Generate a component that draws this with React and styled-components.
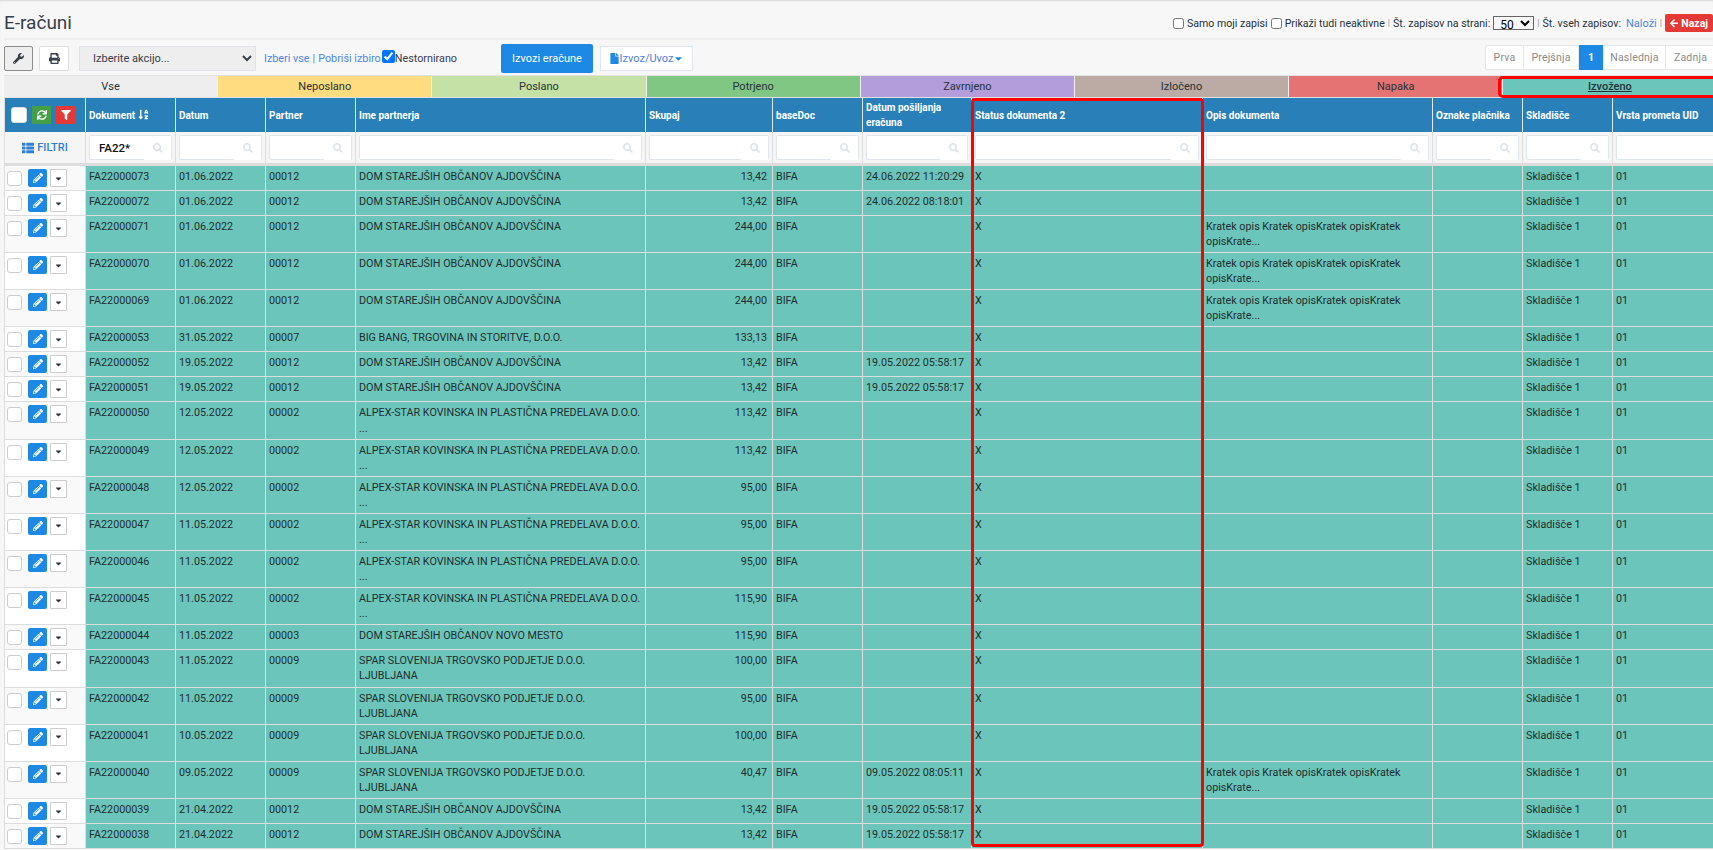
import styled, { createGlobalStyle } from "styled-components";
import {
  FaArrowLeft,
  FaCaretDown,
  FaFile,
  FaFilter,
  FaPencilAlt,
  FaPrint,
  FaSearch,
  FaSortAlphaDown,
  FaSync,
  FaThList,
  FaWrench,
} from "react-icons/fa";

const GlobalStyle = createGlobalStyle`
  html, body {
    margin: 0;
    height: 850px;
    overflow: hidden;
    background: #f7f7f7;
  }
  body {
    font-family: Roboto, "Liberation Sans", sans-serif;
    font-size: 11px;
    line-height: 15px;
    color: #263238;
  }
  * { box-sizing: border-box; }
`;

const Page = styled.div`
  width: 1713px;
  padding-left: 4px;
  box-shadow: inset 0 2px 2px -1px #d8d8d8;
`;

// naslov in nastavitve zgoraj
const Header = styled.header`
  display: flex;
  align-items: center;
  justify-content: space-between;
  height: 40px;
  padding-top: 8px;
  border-bottom: 2px solid #eeeeee;
`;

const Title = styled.h1`
  margin: 0;
  font-size: 19px;
  font-weight: 400;
  line-height: 24px;
  color: #37404a;
`;

const Options = styled.div`
  display: flex;
  align-items: center;
  gap: 3px;
  font-size: 10.6px;
`;

const Check = styled.input.attrs({ type: "checkbox" })`
  width: ${(p) => p.$size || 11}px;
  height: ${(p) => p.$size || 11}px;
  margin: 0;
`;

const Sep = styled.span`
  color: #8a9299;
  font-size: 9px;
`;

const PageSize = styled.select`
  width: 41px;
  height: 14px;
  padding: 0 0 0 2px;
  border: 1px solid #666;
  border-radius: 0;
  background: #f7f7f7;
  font-family: inherit;
  font-size: 12px;
`;

const Link = styled.a`
  color: #4f86e8;
`;

const LoadLink = styled(Link)`
  margin-left: 2px;
  font-size: 11px;
`;

const BackButton = styled.button`
  display: flex;
  align-items: center;
  gap: 3px;
  width: 48px;
  height: 18px;
  padding: 0 5px;
  border: 0;
  border-radius: 2px;
  background: #e53935;
  color: #fff;
  font-family: inherit;
  font-size: 10.5px;
  font-weight: 700;
`;

// orodna vrstica
const Toolbar = styled.div`
  display: flex;
  align-items: center;
  height: 35px;
  padding-top: 1px;
`;

const IconButton = styled.button`
  display: flex;
  align-items: center;
  justify-content: center;
  width: ${(p) => p.$w}px;
  height: 25px;
  margin-right: ${(p) => p.$gap}px;
  padding: 0;
  border: 1px solid ${(p) => (p.$pressed ? "#8c8c8c" : "#dddddd")};
  border-radius: 2px;
  background: ${(p) => (p.$pressed ? "#eeeeee" : "#ffffff")};
  color: #37404a;
  font-size: 11px;
`;

const ActionSelect = styled.select`
  width: 177px;
  height: 25px;
  margin-right: 8px;
  padding-left: 9px;
  border: 1px solid #dde4ec;
  border-radius: 0;
  background: #eeeeee;
  color: #37404a;
  font-family: inherit;
  font-size: 11px;
`;

const Selection = styled.div`
  display: flex;
  align-items: center;
  width: 237px;
  color: #37404a;
  font-size: 10.8px;
`;

const LinkSep = styled.span`
  margin: 0 3px;
  color: #4f86e8;
`;

const Checked = styled(Check)`
  margin: -3px 0 0 1px;
`;

const PrimaryButton = styled.button`
  width: 92px;
  height: 29px;
  margin-right: 7px;
  border: 0;
  border-radius: 2px;
  background: #1e88e5;
  color: #fff;
  font-family: inherit;
  font-size: 11px;
`;

const ExportButton = styled.button`
  display: flex;
  align-items: center;
  justify-content: center;
  width: 93px;
  height: 25px;
  padding: 0;
  border: 1px solid #dce7f1;
  background: #fff;
  color: #4f7ee0;
  font-family: inherit;
  font-size: 11px;
  svg { color: #1e88e5; }
`;

const Pager = styled.nav`
  display: flex;
  height: 25px;
  margin: 0 -4px 2px auto;
  border: 1px solid #e6e6e6;
  border-radius: 2px;
  background: #fff;
`;

const PagerItem = styled.span`
  display: flex;
  align-items: center;
  justify-content: center;
  width: ${(p) => p.$w}px;
  margin-top: ${(p) => (p.$active ? "-1px" : 0)};
  margin-bottom: ${(p) => (p.$active ? "-1px" : 0)};
  border-right: 1px solid #e6e6e6;
  background: ${(p) => (p.$active ? "#1e88e5" : "transparent")};
  color: ${(p) => (p.$active ? "#fff" : "#8a8a8a")};
  font-size: 10.5px;
  font-weight: ${(p) => (p.$active ? 700 : 400)};
  letter-spacing: 0.2px;
`;

// zavihki po statusih
const Tabs = styled.div`
  display: grid;
  grid-template-columns: repeat(8, 214.2px);
  width: 1714px;
  height: 23px;
  border-top: 1px solid #e2e2e2;
  border-bottom: 1px solid #e2e2e2;
`;

const Tab = styled.div`
  position: relative;
  height: 21px;
  border-right: 1px solid #f0f0f0;
  background: ${(p) => p.$color};
  color: #263238;
  font-size: 11px;
  font-weight: ${(p) => (p.$active ? 500 : 400)};
  line-height: 21px;
  text-align: center;
  text-decoration: ${(p) => (p.$active ? "underline" : "none")};
`;

const TabMark = styled.span`
  position: absolute;
  top: 0;
  left: -5px;
  width: 225px;
  height: 22px;
  border: 3px solid #ff0000;
  border-radius: 5px;
`;

const TableWrap = styled.div`
  position: relative;
  width: 1709px;
`;

const ColumnMark = styled.div`
  position: absolute;
  top: 0;
  left: 967px;
  width: 233px;
  height: 749px;
  border: 3px solid #ff0000;
  border-radius: 4px;
  pointer-events: none;
`;

const Table = styled.table`
  width: 1841px;
  table-layout: fixed;
  border-collapse: separate;
  border-spacing: 0;
  border-left: 1px solid #dddddd;
`;

const Col = styled.col`
  width: ${(p) => p.$w}px;
`;

const Th = styled.th`
  height: 34px;
  padding: 2px 3px;
  border-right: 1px solid #dfe9f0;
  background: #2980b9;
  color: #fff;
  font-size: 10px;
  font-weight: 700;
  text-align: left;
  vertical-align: middle;
`;

const HeadTools = styled.div`
  display: flex;
  align-items: center;
  gap: 5px;
  padding-left: 3px;
`;

const HeadCheck = styled.span`
  width: 16px;
  height: 16px;
  border: 1px solid #ddd;
  border-radius: 3px;
  background: #fff;
`;

const HeadButton = styled.span`
  display: flex;
  align-items: center;
  justify-content: center;
  width: 19px;
  height: 18px;
  border-radius: 1px;
  background: ${(p) => p.$color};
  color: #fff;
  font-size: 10px;
`;

const SortIcon = styled(FaSortAlphaDown)`
  margin-left: 3px;
  font-size: 11px;
  vertical-align: -1px;
`;

const FilterCell = styled.td`
  height: 34px;
  padding: 3px;
  border-right: 1px solid #dddddd;
  border-bottom: 3px solid #dddddd;
  background: #f5f5f5;
`;

const FilterLabel = styled.div`
  display: flex;
  align-items: center;
  justify-content: center;
  gap: 3px;
  color: #2f80d8;
  font-size: 11px;
  font-weight: 500;
  svg { font-size: 12px; }
`;

const FilterBox = styled.div`
  display: flex;
  height: 25px;
  border: 1px solid #e0e6ed;
  border-radius: 2px;
  background: #fff;
`;

const FilterInput = styled.input`
  flex: 1;
  min-width: 0;
  padding: 0 0 0 9px;
  border: 0;
  outline: 0;
  background: transparent;
  color: #111;
  font-family: inherit;
  font-size: 11.5px;
  font-weight: 500;
`;

const FilterIcon = styled.span`
  display: flex;
  flex: none;
  align-items: center;
  justify-content: center;
  width: 27px;
  margin-bottom: -1px;
  background: #fff;
  color: #dbe3ec;
  font-size: 10px;
`;

const ActionCell = styled.td`
  height: 25px;
  padding: 0;
  border-right: 1px solid #dddddd;
  border-bottom: 1px solid #dddddd;
  vertical-align: top;
`;

const Row = styled.tr`
  &:nth-child(odd) ${ActionCell} {
    background: #f9f9f9;
  }
  &:nth-child(even) ${ActionCell} {
    background: #ffffff;
  }
`;

const RowTools = styled.div`
  display: flex;
  align-items: flex-start;
  padding: 3px 0 0 2px;
`;

const RowCheck = styled.span`
  width: 15px;
  height: 15px;
  margin-top: 2px;
  margin-right: 6px;
  border: 1px solid #cccccc;
  border-radius: 3px;
  background: #fff;
`;

const EditButton = styled.span`
  display: flex;
  align-items: center;
  justify-content: center;
  width: 19px;
  height: 18px;
  margin-right: 3px;
  border-radius: 2px;
  background: #1e88e5;
  color: #fff;
  font-size: 10px;
`;

const MenuButton = styled.span`
  display: flex;
  align-items: center;
  justify-content: center;
  width: 17px;
  height: 18px;
  border: 1px solid #cccccc;
  border-radius: 1px;
  background: #fff;
  color: #263238;
  font-size: 9px;
`;

const Td = styled.td`
  padding: 3px ${(p) => (p.$right ? "5px" : "3px")} 3px 3px;
  border-right: 1px solid #dddddd;
  border-bottom: 1px solid #dddddd;
  background: #6cc5bb;
  color: #1f2d2d;
  font-size: 10.75px;
  line-height: 15.08px;
  text-align: ${(p) => (p.$right ? "right" : "left")};
  vertical-align: top;
`;

const tabs = [
  ["Vse", "#eeeeee"],
  ["Neposlano", "#ffdc7f"],
  ["Poslano", "#c5e1a5"],
  ["Potrjeno", "#81c784"],
  ["Zavrnjeno", "#b39ddb"],
  ["Izločeno", "#bcaaa4"],
  ["Napaka", "#e57373"],
  ["Izvoženo", "#6cc5bb"],
];

const columns = [
  { name: "Dokument", width: 90 },
  { name: "Datum", width: 90 },
  { name: "Partner", width: 90 },
  { name: "Ime partnerja", width: 290 },
  { name: "Skupaj", width: 127 },
  { name: "baseDoc", width: 90 },
  { name: "Datum pošiljanja eračuna", width: 109 },
  { name: "Status dokumenta 2", width: 231 },
  { name: "Opis dokumenta", width: 230 },
  { name: "Oznake plačnika", width: 90 },
  { name: "Skladišče", width: 90 },
  { name: "Vrsta prometa UID", width: 232 },
];

const DOM = "DOM STAREJŠIH OBČANOV AJDOVŠČINA";
const ALPEX = "ALPEX-STAR KOVINSKA IN PLASTIČNA PREDELAVA D.O.O. ...";
const SPAR = "SPAR SLOVENIJA TRGOVSKO PODJETJE D.O.O. LJUBLJANA";
const OPIS = "Kratek opis Kratek opisKratek opisKratek opisKrate...";

const rows = [
  ["FA22000073", "01.06.2022", "00012", DOM, "13,42", "24.06.2022 11:20:29", ""],
  ["FA22000072", "01.06.2022", "00012", DOM, "13,42", "24.06.2022 08:18:01", ""],
  ["FA22000071", "01.06.2022", "00012", DOM, "244,00", "", OPIS],
  ["FA22000070", "01.06.2022", "00012", DOM, "244,00", "", OPIS],
  ["FA22000069", "01.06.2022", "00012", DOM, "244,00", "", OPIS],
  ["FA22000053", "31.05.2022", "00007", "BIG BANG, TRGOVINA IN STORITVE, D.O.O.", "133,13", "", ""],
  ["FA22000052", "19.05.2022", "00012", DOM, "13,42", "19.05.2022 05:58:17", ""],
  ["FA22000051", "19.05.2022", "00012", DOM, "13,42", "19.05.2022 05:58:17", ""],
  ["FA22000050", "12.05.2022", "00002", ALPEX, "113,42", "", ""],
  ["FA22000049", "12.05.2022", "00002", ALPEX, "113,42", "", ""],
  ["FA22000048", "12.05.2022", "00002", ALPEX, "95,00", "", ""],
  ["FA22000047", "11.05.2022", "00002", ALPEX, "95,00", "", ""],
  ["FA22000046", "11.05.2022", "00002", ALPEX, "95,00", "", ""],
  ["FA22000045", "11.05.2022", "00002", ALPEX, "115,90", "", ""],
  ["FA22000044", "11.05.2022", "00003", "DOM STAREJŠIH OBČANOV NOVO MESTO", "115,90", "", ""],
  ["FA22000043", "11.05.2022", "00009", SPAR, "100,00", "", ""],
  ["FA22000042", "11.05.2022", "00009", SPAR, "95,00", "", ""],
  ["FA22000041", "10.05.2022", "00009", SPAR, "100,00", "", ""],
  ["FA22000040", "09.05.2022", "00009", SPAR, "40,47", "09.05.2022 08:05:11", OPIS],
  ["FA22000039", "21.04.2022", "00012", DOM, "13,42", "19.05.2022 05:58:17", ""],
  ["FA22000038", "21.04.2022", "00012", DOM, "13,42", "19.05.2022 05:58:17", ""],
];

function App() {
  return (
    <Page>
      <GlobalStyle />
      <Header>
        <Title>E-računi</Title>
        <Options>
          <Check />
          <span>Samo moji zapisi</span>
          <Check />
          <span>Prikaži tudi neaktivne</span>
          <Sep>|</Sep>
          <span>Št. zapisov na strani:</span>
          <PageSize defaultValue="50">
            <option>50</option>
          </PageSize>
          <Sep>|</Sep>
          <span>Št. vseh zapisov:</span>
          <LoadLink>Naloži</LoadLink>
          <Sep>|</Sep>
          <BackButton>
            <FaArrowLeft />
            Nazaj
          </BackButton>
        </Options>
      </Header>

      <Toolbar>
        <IconButton $w={29} $gap={6} $pressed>
          <FaWrench />
        </IconButton>
        <IconButton $w={30} $gap={10}>
          <FaPrint />
        </IconButton>
        <ActionSelect>
          <option>Izberite akcijo...</option>
        </ActionSelect>
        <Selection>
          <Link>Izberi vse</Link>
          <LinkSep>|</LinkSep>
          <Link>Pobriši izbiro</Link>
          <Checked $size={13} defaultChecked />
          <span>Nestornirano</span>
        </Selection>
        <PrimaryButton>Izvozi eračune</PrimaryButton>
        <ExportButton>
          <FaFile />
          Izvoz/Uvoz
          <FaCaretDown />
        </ExportButton>
        <Pager>
          <PagerItem $w={38}>Prva</PagerItem>
          <PagerItem $w={55}>Prejšnja</PagerItem>
          <PagerItem $w={25} $active>1</PagerItem>
          <PagerItem $w={62}>Naslednja</PagerItem>
          <PagerItem $w={50}>Zadnja</PagerItem>
        </Pager>
      </Toolbar>

      <Tabs>
        {tabs.map(([label, color]) => (
          <Tab key={label} $color={color} $active={label === "Izvoženo"}>
            {label}
            {label === "Izvoženo" && <TabMark />}
          </Tab>
        ))}
      </Tabs>

      <TableWrap>
        <Table>
          <colgroup>
            <Col $w={81} />
            {columns.map((col) => (
              <Col key={col.name} $w={col.width} />
            ))}
          </colgroup>
          <thead>
            <tr>
              <Th>
                <HeadTools>
                  <HeadCheck />
                  <HeadButton $color="#43a047">
                    <FaSync />
                  </HeadButton>
                  <HeadButton $color="#e53935">
                    <FaFilter />
                  </HeadButton>
                </HeadTools>
              </Th>
              {columns.map((col) => (
                <Th key={col.name}>
                  {col.name}
                  {col.name === "Dokument" && <SortIcon />}
                </Th>
              ))}
            </tr>
            <tr>
              <FilterCell>
                <FilterLabel>
                  <FaThList />
                  FILTRI
                </FilterLabel>
              </FilterCell>
              {columns.map((col) => (
                <FilterCell key={col.name}>
                  <FilterBox>
                    <FilterInput
                      readOnly
                      value={col.name === "Dokument" ? "FA22*" : ""}
                    />
                    <FilterIcon>
                      <FaSearch />
                    </FilterIcon>
                  </FilterBox>
                </FilterCell>
              ))}
            </tr>
          </thead>
          <tbody>
            {rows.map((row) => (
              <Row key={row[0]}>
                <ActionCell>
                  <RowTools>
                    <RowCheck />
                    <EditButton>
                      <FaPencilAlt />
                    </EditButton>
                    <MenuButton>
                      <FaCaretDown />
                    </MenuButton>
                  </RowTools>
                </ActionCell>
                <Td>{row[0]}</Td>
                <Td>{row[1]}</Td>
                <Td>{row[2]}</Td>
                <Td>{row[3]}</Td>
                <Td $right>{row[4]}</Td>
                <Td>BIFA</Td>
                <Td>{row[5]}</Td>
                <Td>X</Td>
                <Td>{row[6]}</Td>
                <Td />
                <Td>Skladišče 1</Td>
                <Td>01</Td>
              </Row>
            ))}
          </tbody>
        </Table>
        <ColumnMark />
      </TableWrap>
    </Page>
  );
}

export default App;
